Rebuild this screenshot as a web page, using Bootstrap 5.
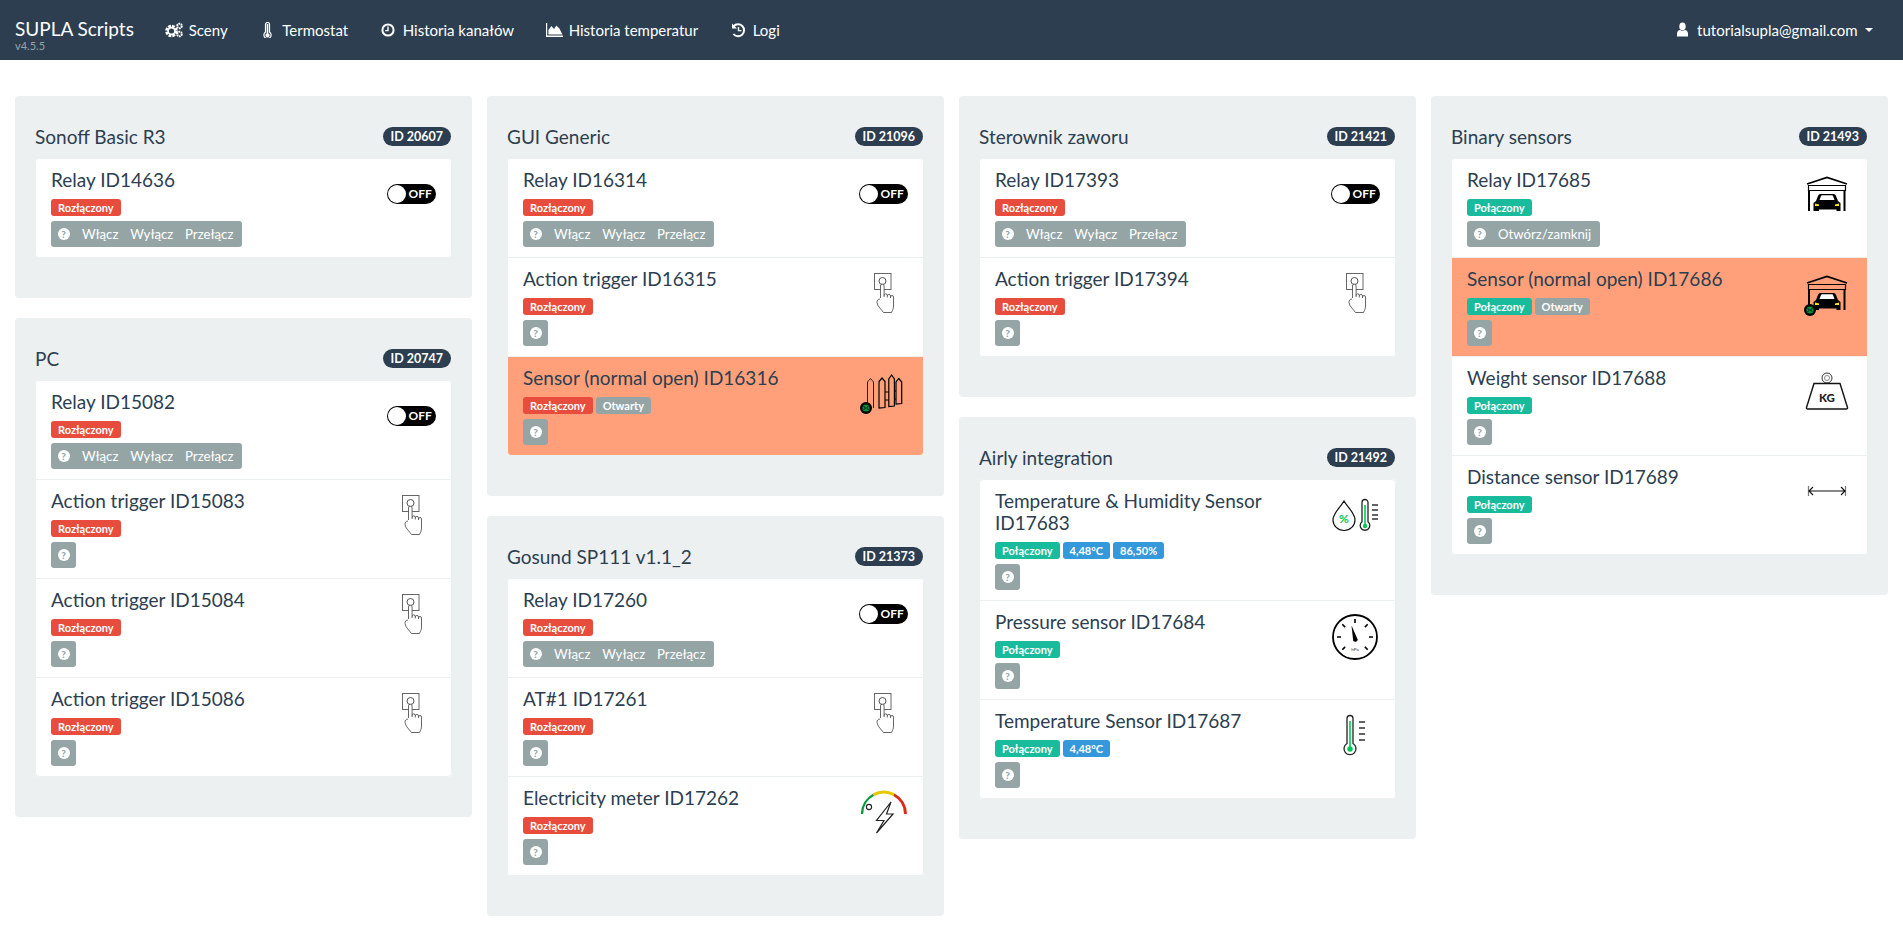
<!DOCTYPE html>
<html lang="pl">
<head>
  <meta charset="UTF-8" />
  <meta name="viewport" content="width=device-width, initial-scale=1.0" />
  <title>SUPLA Scripts</title>
  <link href="https://cdn.jsdelivr.net/npm/bootstrap@5.3.0/dist/css/bootstrap.min.css" rel="stylesheet">
  <style>
    body { font-family: Lato, "Liberation Sans", sans-serif; font-size: 15px; color: #2c3e50; background: #fff; }
    .top-bar { background: #2c3e50; height: 60px; padding: 0; }
    .top-bar .container-fluid { padding: 0 15px; height: 60px; flex-wrap: nowrap; }
    .brand-box { position: relative; color: #fff; font-size: 19px; line-height: 24px; margin-right: 15.5px; margin-top: -2px; }
    .brand-ver { position: absolute; left: 0; top: 22px; font-size: 11px; line-height: 14px; color: #95a5a6; }
    .top-link { display: flex; align-items: center; color: #fff; padding: 0 15.3px; white-space: nowrap; text-decoration: none; }
    .top-link:hover { color: #18bc9c; }
    .nav-ico { width: 19px; height: 16px; margin-right: 5px; flex: none; fill: #fff; }
    .drop-caret { display: inline-block; margin-left: 7px; border-top: 4px solid #fff; border-left: 4px solid transparent; border-right: 4px solid transparent; }
    .board { padding: 36px 15px 0; }
    .board .row { --bs-gutter-x: 15px; }
    .dev-well { background: #ecf0f1; border-radius: 4px; padding: 20px 20px 40px; margin-bottom: 20px; }
    .dev-head { height: 42px; }
    .dev-name { font-size: 19px; line-height: 21.5px; margin: 0; font-weight: 400; }
    .dev-id { background: #2c3e50; color: #fff; border-radius: 10px; font-size: 12.5px; font-weight: 700; line-height: 19px; padding: 0 8px; margin: -2px 1px 0 0; }
    .chan-list { background: #fff; border-radius: 4px; }
    .chan-item { border: 1px solid #ecf0f1; margin-top: -1px; padding: 10px 0 10px 15px; display: flex; background: #fff; }
    .chan-item:first-child { margin-top: 0; border-top-left-radius: 4px; border-top-right-radius: 4px; }
    .chan-item:last-child { border-bottom-left-radius: 4px; border-bottom-right-radius: 4px; }
    .chan-item.is-open { background: #ffa07a; }
    .chan-main { flex: 1; min-width: 0; }
    .chan-name { font-size: 19px; line-height: 21.5px; margin: 0 0 8.5px; font-weight: 400; }
    .chan-labels { display: flex; gap: 3px; height: 17px; margin-bottom: 5px; }
    .chan-label { color: #fff; font-size: 11px; font-weight: 700; line-height: 17px; padding: 0 7px; border-radius: 3px; }
    .lb-red { background: #e74c3c; }
    .lb-green { background: #18bc9c; }
    .lb-blue { background: #3498db; }
    .lb-gray { background: #95a5a6; }
    .act-group { display: flex; width: fit-content; background: #95a5a6; border-radius: 3px; height: 26px; align-items: center; padding-right: 2.5px; }
    .act-group.only-q { padding-right: 0; }
    .act-btn { background: none; border: 0; color: #fff; font-size: 13.2px; line-height: 26px; padding: 0 5.9px; }
    .act-q { width: 25px; padding: 0; display: flex; align-items: center; justify-content: center; height: 26px; }
    .q-dot { width: 12px; height: 12px; border-radius: 50%; background: #fff; color: #95a5a6; font-size: 10px; font-weight: 900; line-height: 12px; text-align: center; }
    .chan-ico { width: 80px; height: 64px; flex: none; display: block; }
    .chan-side { width: 80px; flex: none; }
    .switch-off { display: flex; align-items: center; width: 49px; height: 20px; margin: 15px auto 0; background: #000; border-radius: 10px; padding: 1px; color: #fff; font-size: 12px; font-weight: 700; }
    .switch-off i { display: block; width: 18px; height: 18px; background: #fff; border-radius: 50%; margin-right: 3px; }
  </style>
</head>
<body>
  <nav class="navbar top-bar">
    <div class="container-fluid justify-content-start">
      <div class="brand-box">SUPLA Scripts<div class="brand-ver">v4.5.5</div></div>
      <a class="top-link" href="#">
        <svg class="nav-ico" viewBox="0 0 19 16"><circle cx="6.500" cy="9" r="4.600" fill="none" stroke="#fff" stroke-width="3.400" stroke-dasharray="2.600 1"/><circle cx="6.500" cy="9" r="3.400" fill="none" stroke="#fff" stroke-width="1.600"/><circle cx="14.500" cy="4" r="2.300" fill="none" stroke="#fff" stroke-width="2" stroke-dasharray="1.600 .6"/><circle cx="14.500" cy="12" r="2.300" fill="none" stroke="#fff" stroke-width="2" stroke-dasharray="1.600 .6"/></svg>Sceny</a>
      <a class="top-link" href="#">
        <svg class="nav-ico" viewBox="0 0 19 16"><path d="M7.500 10V2.500a2 2 0 0 1 4 0V10a3.600 3.600 0 1 1-4 0z" fill="none" stroke="#fff" stroke-width="1.200"/><path d="M8.700 2h1.600v9.500a2 2 0 1 1-1.600 0z"/></svg>Termostat</a>
      <a class="top-link" href="#">
        <svg class="nav-ico" viewBox="0 0 19 16"><circle cx="9" cy="8" r="5.600" fill="none" stroke="#fff" stroke-width="2"/><path d="M9 4.500V8.600H6.200" fill="none" stroke="#fff" stroke-width="1.400"/></svg>Historia kanałów</a>
      <a class="top-link" href="#">
        <svg class="nav-ico" viewBox="0 0 19 16"><path d="M1 1h1.200v12.600H18V15H1z"/><path d="M3.400 12.400V8l3-4 2.600 3 2.400-3.600 3 3 3 6z"/></svg>Historia temperatur</a>
      <a class="top-link" href="#">
        <svg class="nav-ico" viewBox="0 0 19 16"><path d="M4.600 4.200A6 6 0 1 1 4.400 12" fill="none" stroke="#fff" stroke-width="1.900"/><path d="M3 1.600v5h5z"/><path d="M9.500 5v3.600h3" fill="none" stroke="#fff" stroke-width="1.400"/></svg>Logi</a>
      <a class="top-link ms-auto" href="#">
        <svg class="nav-ico" viewBox="0 0 19 16"><ellipse cx="9.500" cy="4.400" rx="3.200" ry="3.800"/><path d="M4 14.600v-3c0-2 1.400-3.400 3.200-3.600 1.400 1 3.200 1 4.600 0 1.800.2 3.200 1.600 3.200 3.600v3z"/></svg>tutorialsupla@gmail.com<span class="drop-caret"></span></a>
    </div>
  </nav>

  <div class="board">
    <div class="row" id="board"></div>
  </div>

  <script src="https://cdn.jsdelivr.net/npm/bootstrap@5.3.0/dist/js/bootstrap.bundle.min.js"></script>
  <script>
    const dot = (x, y) => `<circle cx="${x}" cy="${y}" r="6" fill="#000"/><circle cx="${x}" cy="${y}" r="3.600" fill="#0a8f3c"/><path d="M${x-2.500} ${y-2}l2 2-2 2M${x+2.500} ${y-2}l-2 2 2 2" fill="none" stroke="#000" stroke-width=".8"/>`;
    const garage = `<path d="M20 15l20-6.500L60 15" fill="none" stroke="#000" stroke-width="1.800"/><path d="M21.500 16.500h37v5h-37z" fill="none" stroke="#000" stroke-width="1.200"/><path d="M22 22v20M57.500 22v20" stroke="#000" stroke-width="2"/><path d="M26.500 42v-8l2.500-2 2-5c.5-1.500 1.500-2 3-2h12c1.500 0 2.500.5 3 2l2 5 2.500 2v8h-4v-1.500H32V42z"/><path d="M32.500 31l1.500-4c.2-.5.500-.7 1-.7h10c.5 0 .8.2 1 .7l1.500 4z" fill="#fff"/><path d="M28 34.500l4 1v1.500h-4zM52 34.500l-4 1v1.500h4z" fill="#ffe600"/>`;
    const therm = (x, top, bulb, r, ticks, tx) => `<path d="M${x-3} ${bulb-r+.5}V${top+2.500}a3 3 0 0 1 6 0V${bulb-r+.5}a${r} ${r} 0 1 1-6 0z" fill="#fff" stroke="#222" stroke-width="1.300"/><path d="M${x} ${top+5}V${bulb}" stroke="#00c853" stroke-width="1.600"/><circle cx="${x}" cy="${bulb}" r="${r/2.200}" fill="#00c853"/>` + ticks.map(t => `<path d="M${tx} ${t}h6" stroke="#222" stroke-width="1.400"/>`).join("");

    const icons = {
      hand: `<rect x="31.500" y="5.500" width="16.500" height="16" fill="#fff" stroke="#666"/><circle cx="39.500" cy="13" r="3.500" fill="none" stroke="#555"/><path d="M37.500 30V18a1.800 1.800 0 0 1 3.600 0v11M41.100 27.500a1.600 1.600 0 0 1 3.200 0v2M44.300 28a1.600 1.600 0 0 1 3.200 0v2M47.500 29a1.500 1.500 0 0 1 3 0v9c0 3-1 4-2 6.500h-8c-2-3-6-6-6.500-10-.2-2 1-3.500 3-3.500" fill="#fff" stroke="#555" stroke-width=".9"/>`,
      fence: `<path d="M24.500 41V15l3-3.500 3 3.500v26" fill="none" stroke="#222" stroke-width="1"/><path d="M36 41V14.500l3-3.500 3 3.500v26zM45.800 39.500V12l2.800-4 2.800 4v27zM53 37V15l2.800-3.500L58.700 15v21.500z" fill="none" stroke="#000" stroke-width="1.200"/><path d="M42 25h3.800M42 33h3.800M51.400 24h1.600M51.400 32h1.600" stroke="#000"/>` + dot(23, 41),
      garage: garage,
      garageDot: garage + dot(23, 42),
      gauge: `<circle cx="40" cy="26" r="22" fill="#fff" stroke="#000" stroke-width="1.800"/><path d="M40 8v4M58 26h-4M22 26h4M27.300 13.300l2.800 2.800M52.700 13.300l-2.800 2.800M27.300 38.700l2.800-2.800M52.700 38.700l-2.800-2.800" stroke="#000" stroke-width="1.600"/><path d="M36.500 14.500L42.800 28.800a2.600 2.600 0 0 1-4.600 1z"/><text x="40" y="39.500" font-size="4.500" text-anchor="middle" fill="#333" font-family="Lato, sans-serif">hPa</text>`,
      drop: `<path d="M29 11c-3 5.500-11 12-11 19a11 10.500 0 0 0 22 0c0-7-8-13.500-11-19z" fill="#fff" stroke="#111" stroke-width="1.200"/><text x="29" y="33" font-size="12" font-weight="700" text-anchor="middle" fill="#00c853" font-family="Lato, sans-serif">%</text>` + therm(50, 10, 36, 4.800, [15, 20, 25, 29], 57),
      therm: therm(35, 6, 39, 6, [12, 18, 24, 30], 44),
      meter: `<path d="M19 27a22 22 0 0 1 11.500-19.300" fill="none" stroke="#0a9b3c" stroke-width="2.400"/><path d="M30.500 7.700a22 22 0 0 1 20.500 0" fill="none" stroke="#e8c600" stroke-width="3"/><path d="M51 7.700A22 22 0 0 1 62.500 27" fill="none" stroke="#d92b1e" stroke-width="3"/><circle cx="26" cy="20" r="2.600" fill="none" stroke="#222" stroke-width="1.100"/><path d="M48 15L33.500 33.500h7.500l-7.500 12.500L50 27h-6.500z" fill="none" stroke="#222" stroke-width="1.200"/>`,
      kg: `<circle cx="40" cy="11" r="5" fill="#fff" stroke="#333" stroke-width="1"/><circle cx="40" cy="11" r="2.500" fill="none" stroke="#888"/><path d="M27 16.500h26l7.500 24c.3 1-.4 1.500-1.200 1.500H20.700c-.8 0-1.500-.5-1.200-1.500z" fill="#fff" stroke="#111" stroke-width="1.400"/><text x="40" y="35" font-size="11.500" font-weight="900" text-anchor="middle" fill="#222" font-family="Lato, sans-serif">KG</text>`,
      dist: `<path d="M21.500 20v10M58.500 20v10" stroke="#777" stroke-width="1.200"/><path d="M22 25h36M26 21l-4 4 4 4M54 21l4 4-4 4" fill="none" stroke="#111" stroke-width="1.100"/>`
    };

    const R = "Rozłączony", P = "Połączony";
    const relayBtns = ["Włącz", "Wyłącz", "Przełącz"];
    const columns = [
      [
        { name: "Sonoff Basic R3", id: 20607, items: [
          { name: "Relay ID14636", st: R, sw: true, btns: relayBtns }
        ]},
        { name: "PC", id: 20747, items: [
          { name: "Relay ID15082", st: R, sw: true, btns: relayBtns },
          { name: "Action trigger ID15083", st: R, ico: "hand" },
          { name: "Action trigger ID15084", st: R, ico: "hand" },
          { name: "Action trigger ID15086", st: R, ico: "hand" }
        ]}
      ],
      [
        { name: "GUI Generic", id: 21096, items: [
          { name: "Relay ID16314", st: R, sw: true, btns: relayBtns },
          { name: "Action trigger ID16315", st: R, ico: "hand" },
          { name: "Sensor (normal open) ID16316", st: R, ico: "fence", open: true, extra: [["lb-gray", "Otwarty"]] }
        ]},
        { name: "Gosund SP111 v1.1_2", id: 21373, items: [
          { name: "Relay ID17260", st: R, sw: true, btns: relayBtns },
          { name: "AT#1 ID17261", st: R, ico: "hand" },
          { name: "Electricity meter ID17262", st: R, ico: "meter" }
        ]}
      ],
      [
        { name: "Sterownik zaworu", id: 21421, items: [
          { name: "Relay ID17393", st: R, sw: true, btns: relayBtns },
          { name: "Action trigger ID17394", st: R, ico: "hand" }
        ]},
        { name: "Airly integration", id: 21492, items: [
          { name: "Temperature &amp; Humidity Sensor ID17683", st: P, ico: "drop", extra: [["lb-blue", "4,48°C"], ["lb-blue", "86,50%"]] },
          { name: "Pressure sensor ID17684", st: P, ico: "gauge" },
          { name: "Temperature Sensor ID17687", st: P, ico: "therm", extra: [["lb-blue", "4,48°C"]] }
        ]}
      ],
      [
        { name: "Binary sensors", id: 21493, items: [
          { name: "Relay ID17685", st: P, ico: "garage", btns: ["Otwórz/zamknij"] },
          { name: "Sensor (normal open) ID17686", st: P, ico: "garageDot", open: true, extra: [["lb-gray", "Otwarty"]] },
          { name: "Weight sensor ID17688", st: P, ico: "kg" },
          { name: "Distance sensor ID17689", st: P, ico: "dist" }
        ]}
      ]
    ];

    function itemHtml(it) {
      const stClass = it.st === R ? "lb-red" : "lb-green";
      const labels = [[stClass, it.st], ...(it.extra || [])]
        .map(l => `<span class="chan-label ${l[0]}">${l[1]}</span>`).join("");
      const btns = (it.btns || []).map(b => `<button class="act-btn">${b}</button>`).join("");
      const side = it.sw
        ? `<div class="chan-side"><div class="switch-off"><i></i>OFF</div></div>`
        : `<svg class="chan-ico" viewBox="0 0 80 64">${icons[it.ico]}</svg>`;
      return `<div class="chan-item ${it.open ? "is-open" : ""}">
        <div class="chan-main">
          <h4 class="chan-name">${it.name}</h4>
          <div class="chan-labels">${labels}</div>
          <div class="act-group ${btns ? "" : "only-q"}"><button class="act-btn act-q"><span class="q-dot">?</span></button>${btns}</div>
        </div>
        ${side}
      </div>`;
    }

    document.getElementById("board").innerHTML = columns.map(col => `<div class="col-3">${col.map(dev => `
      <div class="dev-well">
        <div class="dev-head d-flex align-items-center justify-content-between">
          <h4 class="dev-name">${dev.name}</h4>
          <span class="dev-id">ID ${dev.id}</span>
        </div>
        <div class="chan-list">${dev.items.map(itemHtml).join("")}</div>
      </div>`).join("")}</div>`).join("");
  </script>
</body>
</html>
